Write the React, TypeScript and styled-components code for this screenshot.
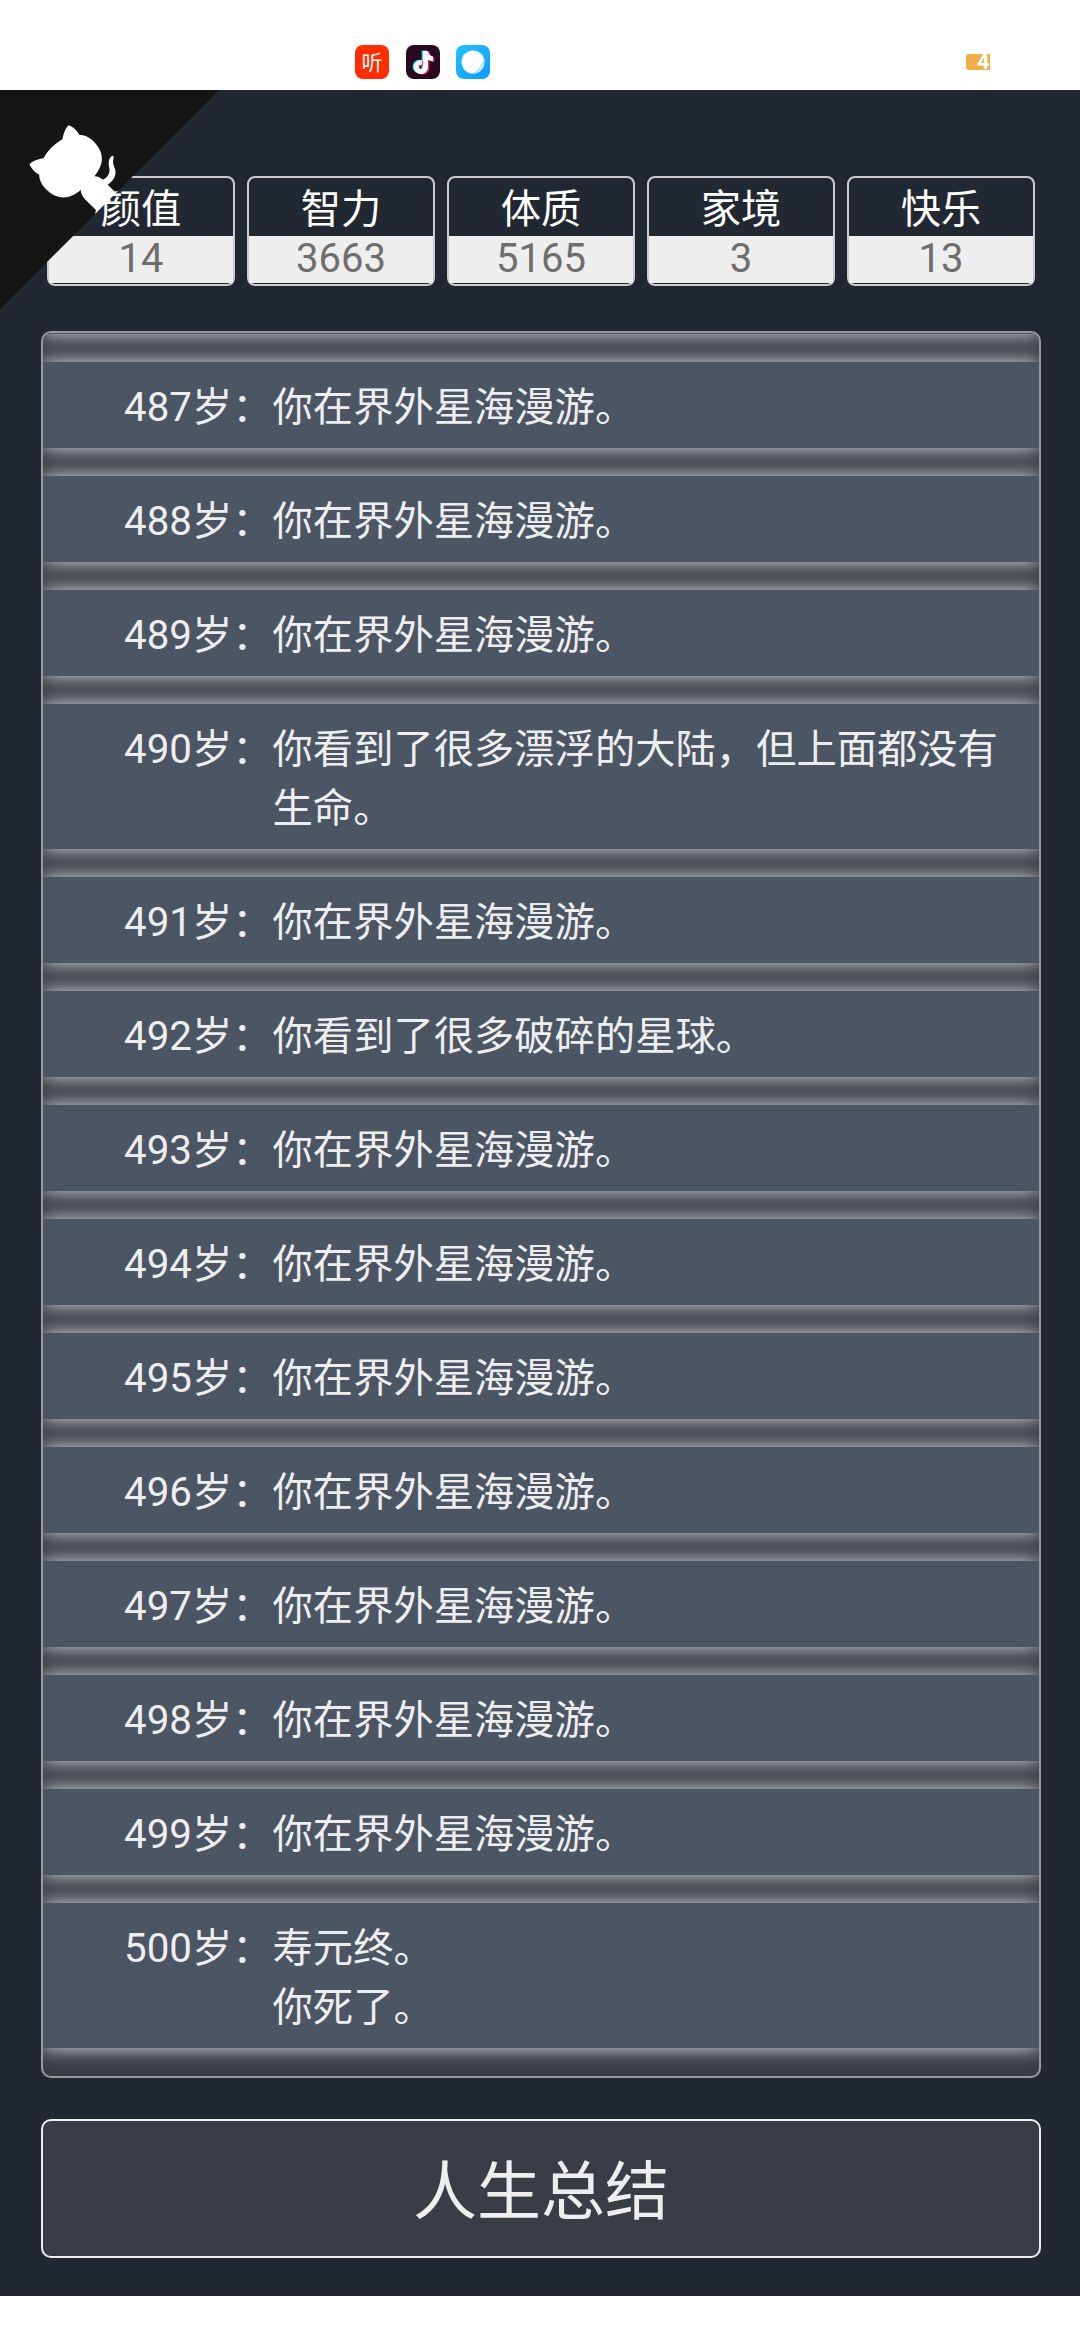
import React from "react";
import styled, { createGlobalStyle } from "styled-components";

const stats = [
  { label: "颜值", value: 14 },
  { label: "智力", value: 3663 },
  { label: "体质", value: 5165 },
  { label: "家境", value: 3 },
  { label: "快乐", value: 13 },
];

const roam = ["你在界外星海漫游。"];

const events: { age: number; lines: string[] }[] = [
  { age: 487, lines: roam },
  { age: 488, lines: roam },
  { age: 489, lines: roam },
  { age: 490, lines: ["你看到了很多漂浮的大陆，但上面都没有生命。"] },
  { age: 491, lines: roam },
  { age: 492, lines: ["你看到了很多破碎的星球。"] },
  { age: 493, lines: roam },
  { age: 494, lines: roam },
  { age: 495, lines: roam },
  { age: 496, lines: roam },
  { age: 497, lines: roam },
  { age: 498, lines: roam },
  { age: 499, lines: roam },
  { age: 500, lines: ["寿元终。", "你死了。"] },
];

const App = () => {
  return (
    <>
      <GlobalStyle />
      <StatusBar>
        <AppIcon viewBox="0 0 34 34">
          <rect width="34" height="34" rx="8" fill="#ff2d00" />
          <text x="17" y="24.500" textAnchor="middle" fontSize="21" fill="#fff" fontFamily="'Noto Sans CJK SC', sans-serif">听</text>
        </AppIcon>
        <AppIcon viewBox="0 0 34 34">
          <rect width="34" height="34" rx="8" fill="#2a0a22" />
          <path transform="translate(-1.300 -0.6)" fill="#2ee6e6" d={NOTE} />
          <path transform="translate(1.300 0.6)" fill="#f5275c" d={NOTE} />
          <path fill="#fff" d={NOTE} />
        </AppIcon>
        <AppIcon viewBox="0 0 34 34">
          <defs>
            <linearGradient id="blue" x1="0" y1="0" x2="1" y2="1">
              <stop offset="0" stopColor="#25c0ff" />
              <stop offset="1" stopColor="#0a9cff" />
            </linearGradient>
          </defs>
          <rect width="34" height="34" rx="8" fill="url(#blue)" />
          <circle cx="17" cy="17" r="11.500" fill="#fff" />
          <path fill="#bfe4fb" d="M27.800 13c1.500 6-1 11-5 13.700-2.500 1.500-5 1.800-7 1.600 5-1.500 9.500-7 12-15.300z" />
        </AppIcon>
        <Battery>4</Battery>
      </StatusBar>

      <Main>
        <CornerCat viewBox="0 0 250 250">
          <g transform="translate(250 0) scale(-1 1)">
            <path fill="#151513" d="M0,0 L115,115 L130,115 L142,142 L250,250 L250,0 Z" />
            <path
              fill="#fff"
              d="M128.3,109.0 C113.8,99.7 119.0,89.6 119.0,89.6 C122.0,82.7 120.5,78.6 120.5,78.6 C119.2,72.0 123.4,76.3 123.4,76.3 C127.3,80.9 125.5,87.3 125.5,87.3 C122.9,97.6 130.6,101.9 134.4,103.2"
            />
            <path
              fill="#fff"
              d="M115.0,115.0 C114.9,115.1 118.7,116.5 119.8,115.4 L133.7,101.6 C136.9,99.2 139.9,98.4 142.2,98.6 C133.8,88.0 127.5,74.4 143.8,58.0 C148.5,53.4 154.0,51.2 159.7,51.0 C160.3,49.4 163.2,43.6 171.4,40.1 C171.4,40.1 176.1,42.5 178.8,56.2 C183.1,58.6 187.2,61.8 190.9,65.4 C194.5,69.0 197.7,73.2 200.1,77.6 C213.8,80.2 216.3,84.9 216.3,84.9 C212.7,93.1 206.9,96.0 205.4,96.6 C205.1,102.4 203.0,107.8 198.3,112.5 C181.9,128.9 168.3,122.5 157.7,114.1 C157.9,116.9 156.7,120.9 152.7,124.9 L141.0,136.5 C139.8,137.7 141.6,141.9 141.8,141.8 Z"
            />
          </g>
        </CornerCat>

        <StatRow>
          {stats.map((s) => (
            <StatCard key={s.label}>
              <StatLabel>{s.label}</StatLabel>
              <StatValue>{s.value}</StatValue>
            </StatCard>
          ))}
        </StatRow>

        <Trajectory>
          {/* the list is scrolled to its end, the row above only shows by its glow */}
          <EventRow aria-hidden="true" />
          {events.map((e) => (
            <EventRow key={e.age}>
              <Age>{e.age}岁：</Age>
              <EventText>
                {e.lines.map((line) => (
                  <div key={line}>{line}</div>
                ))}
              </EventText>
            </EventRow>
          ))}
        </Trajectory>

        <SummaryButton>人生总结</SummaryButton>
      </Main>
    </>
  );
};

export default App;

const NOTE =
  "M17 6h5c.4 3 2 5.200 5 5.600v4.600c-1.900 0-3.600-.6-5-1.600v7.400c0 4.300-3.300 7-7 7s-7-2.900-7-7 3.400-7.300 8-6.700v4.700c-2-.5-3.300.5-3.300 2 0 1.300 1 2.300 2.300 2.300 1.400 0 2-1 2-2.500z";

const GlobalStyle = createGlobalStyle`
  html, body {
    margin: 0;
    background: #fff;
  }
  body {
    font-family: Roboto, "Noto Sans CJK SC", sans-serif;
  }
`;

const StatusBar = styled.div`
  display: flex;
  align-items: center;
  gap: 16.5px;
  box-sizing: border-box;
  height: 90px;
  padding: 45px 90px 11px 355px;
`;

const AppIcon = styled.svg`
  width: 34px;
  height: 34px;
`;

const Battery = styled.div`
  margin-left: auto;
  width: 24px;
  height: 16px;
  overflow: hidden;
  border-radius: 3px 0 0 3px;
  background: #f2ae47;
  color: #fff;
  font: 700 22px/16px Roboto, sans-serif;
  text-indent: 11px;
  white-space: nowrap;
`;

const Main = styled.main`
  position: relative;
  box-sizing: border-box;
  height: 2206px;
  padding: 86px 39px 0 41px;
  background: #222831;
`;

const CornerCat = styled.svg`
  position: absolute;
  top: 0;
  left: 0;
  width: 219px;
  height: 219px;
`;

const StatRow = styled.div`
  display: flex;
  gap: 12px;
  margin: 0 6px;
`;

const StatCard = styled.div`
  flex: 1;
  box-sizing: border-box;
  height: 110px;
  padding-bottom: 1px;
  border: 2px solid #ccc;
  border-radius: 8px;
  text-align: center;
`;

const StatLabel = styled.div`
  box-sizing: border-box;
  height: 58px;
  padding-top: 3px;
  color: #fff;
  font-size: 40.3px;
  line-height: 58px;
`;

const StatValue = styled.div`
  height: 47px;
  background: #eee;
  color: #6e6e6e;
  font-size: 40px;
  line-height: 46px;
`;

const Trajectory = styled.div`
  display: flex;
  flex-direction: column;
  justify-content: flex-end;
  gap: 28px;
  box-sizing: border-box;
  height: 1747px;
  margin-top: 45px;
  padding-bottom: 28px;
  overflow: hidden;
  border: 2px solid #9a9a9a;
  border-radius: 10px;
  background: #393e46;
`;

const EventRow = styled.div`
  display: flex;
  flex-shrink: 0;
  box-sizing: border-box;
  min-height: 86px;
  padding: 16px 20px 11px 81px;
  background: #4b5563;
  box-shadow: 0 0 18px rgba(255, 255, 255, 0.85);
  color: #eee;
  font-size: 40.3px;
  line-height: 59px;
`;

const Age = styled.span`
  flex: 0 0 148px;
  white-space: nowrap;
`;

const EventText = styled.div`
  flex: 1;
`;

const SummaryButton = styled.button`
  display: block;
  box-sizing: border-box;
  width: 100%;
  height: 139px;
  margin-top: 41px;
  padding: 0 0 5px;
  border: 2px solid #eee;
  border-radius: 10px;
  background: #393e46;
  color: #eee;
  font-family: inherit;
  font-size: 64px;
`;
